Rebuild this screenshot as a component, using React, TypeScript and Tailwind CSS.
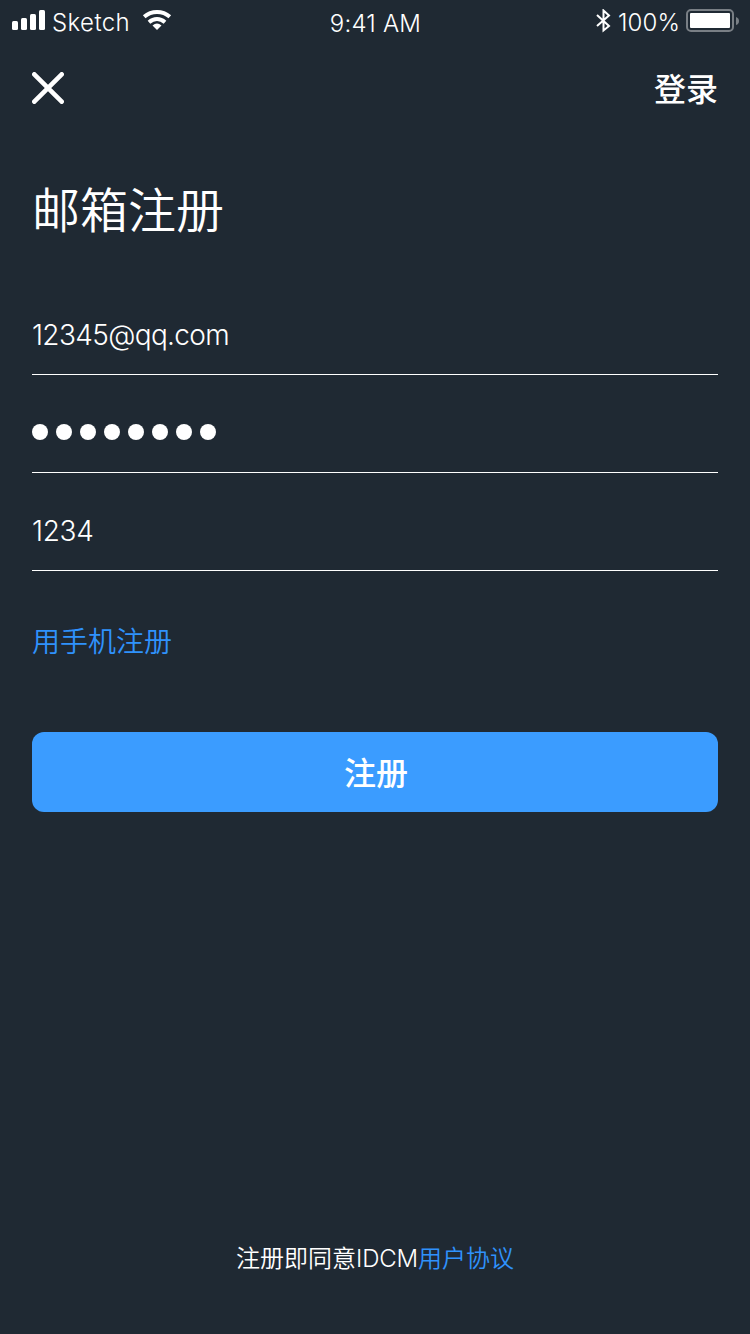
export default function App() {
  const fields = [
    { value: '12345@qq.com', spacing: 'tracking-[-0.65px]' },
    { value: '', spacing: 'tracking-normal' },
    { value: '1234', spacing: 'tracking-[-0.3px]' },
  ];
  return (
    <main className="flex h-[1334px] w-[750px] flex-col bg-[#1f2933] font-['Inter','Noto_Sans_CJK_SC',sans-serif] text-white">
      <header className="grid h-10 grid-cols-[1fr_auto_1fr] items-start pl-3 pr-[11px] text-2xl font-[350] leading-10">
        <div className="flex">
          <svg className="mt-[10px]" width="33" height="20" viewBox="0 0 33 20" fill="currentColor" aria-hidden="true">
            <rect x="0" y="11" width="6" height="9" rx="1.5" />
            <rect x="9" y="8" width="6" height="12" rx="1.5" />
            <rect x="18" y="4" width="6" height="16" rx="1.5" />
            <rect x="27" y="0" width="6" height="20" rx="1.5" />
          </svg>
          <span className="ml-[7px] mt-[3px] w-[78px] tracking-[0.4px]">Sketch</span>
          <svg className="ml-[12px] mt-[9px]" width="30" height="21" viewBox="0 0 30 21" fill="none" stroke="currentColor" strokeWidth="4" aria-hidden="true">
            <path d="M2.2 7.7C9.5 1.3 20.5 1.3 27.8 7.7M7 13.2C11.8 9 18.2 9 23 13.2" />
            <path d="M10.5 16.4Q15 12.6 19.5 16.4L15 21Z" fill="currentColor" stroke="none" />
          </svg>
        </div>
        <span className="mt-1 tracking-[0.2px]">9:41 AM</span>
        <div className="flex justify-end">
          <svg className="mt-[9px]" width="15" height="24" viewBox="0 0 15 24" fill="none" stroke="currentColor" strokeWidth="2" aria-hidden="true">
            <path d="M1 6L13 17L7.5 21.5V1.5L13 6.5L1 17" />
          </svg>
          <span className="ml-[7px] mt-[3px] w-[62px] tracking-[0.1px]">100%</span>
          <svg className="ml-[6px] mt-[9px]" width="53" height="23" viewBox="0 0 53 23" fill="none" aria-hidden="true">
            <rect x="1" y="1" width="46" height="21" rx="4" stroke="#797f85" strokeWidth="2" />
            <rect x="4" y="4" width="40" height="15" rx="1" fill="white" />
            <path d="M50 8Q53 9 53 12Q53 15 50 16Z" fill="#797f85" />
          </svg>
        </div>
      </header>
      <nav className="flex h-24 items-center justify-between px-8">
        <button aria-label="关闭">
          <svg width="32" height="32" viewBox="0 0 32 32" stroke="currentColor" strokeWidth="4.6" strokeLinecap="round" aria-hidden="true"><path d="M2.3 2.3L29.7 29.7M29.7 2.3L2.3 29.7" /></svg>
        </button>
        <button className="pt-1 text-[32px] font-medium">登录</button>
      </nav>
      <h1 className="ml-8 mt-10 text-[48px] font-[350] leading-[70px]">邮箱注册</h1>
      <form className="mx-8 mt-[31px]">
        {fields.map(({ value, spacing }, index) => (
          <div key={index} className={`flex h-[98px] items-center border-b border-white pt-4 text-[28px] font-light ${spacing}`}>
            {value ? <span className="pt-[2px]">{value}</span> : <span className="flex gap-2">{Array.from({ length: 8 }, (_, dot) => <i key={dot} className="size-4 rounded-full bg-white" />)}</span>}
          </div>
        ))}
      </form>
      <a className="ml-8 mt-[51px] text-[28px] font-[350] leading-10 text-[#2f92fc]">用手机注册</a>
      <button className="mx-8 mt-[70px] h-20 rounded-xl bg-[#3b9cff] pl-[2px] pt-1 text-[32px] font-medium">注册</button>
      <footer className="mb-[59px] mt-auto text-center text-2xl font-[350]">注册即同意<span className="font-light tracking-[-0.2px]">IDCM</span><span className="text-[#2f92fc]">用户协议</span></footer>
    </main>
  );
}
